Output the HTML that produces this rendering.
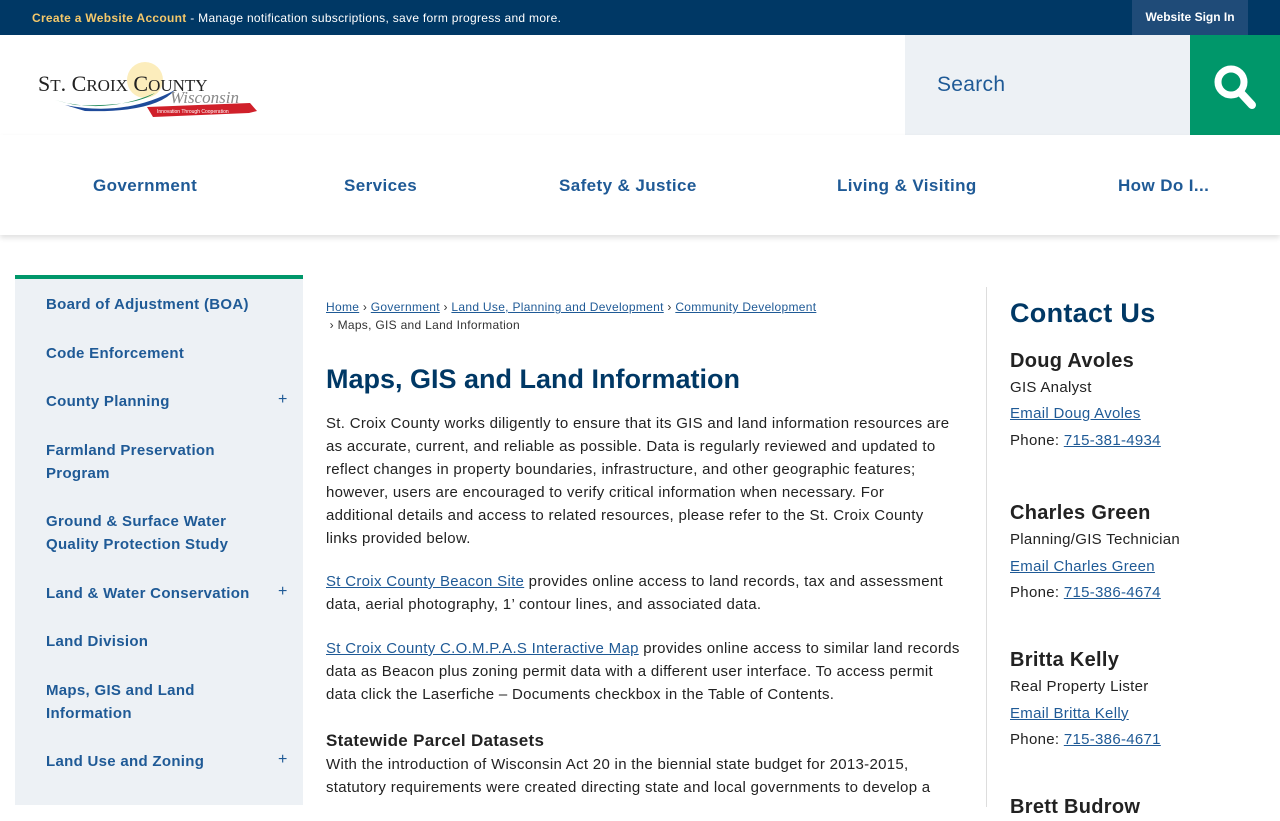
<!DOCTYPE html>
<html><head><meta charset="utf-8"><style>
*{box-sizing:border-box;margin:0;padding:0}
body{width:1280px;height:800px;overflow:hidden;background:#fff;font-family:"Liberation Sans",Arial,sans-serif;color:#222;position:relative}
a{color:#1f5a96}
.top{position:absolute;left:0;top:0;width:1280px;height:35px;background:#003865;color:#fff;font-size:12px;font-weight:bold}
.top .msg{position:absolute;left:32px;top:11px;letter-spacing:0.3px;white-space:nowrap}
.top .msg b{color:#f4c86a}
.top .msg span{font-weight:normal;color:#fff}
.top .sign{position:absolute;left:1132px;top:0;width:116px;height:35px;background:#1f4b78;text-align:center;line-height:35px;font-size:12px}
.search{position:absolute;left:905px;top:35px;width:285px;height:100px;background:#edf1f5;font-size:21px;color:#1f5a96;padding:38px 0 0 32px;letter-spacing:0.3px}
.sbtn{position:absolute;left:1190px;top:35px;width:90px;height:100px;background:#00976a}
.nav{position:absolute;left:0;top:135px;width:1280px;height:100px;background:#fff;box-shadow:0 3px 5px rgba(0,0,0,.12)}
.nav div{position:absolute;top:41px;font-size:17px;font-weight:bold;color:#1f5a96;letter-spacing:0.4px}
.side{position:absolute;left:15px;top:275px;width:288px;height:530px;background:#edf1f5;border-top:4px solid #00976a}
.side div{position:absolute;left:31px;font-size:15px;font-weight:bold;color:#1f5a96;line-height:23px;letter-spacing:0.3px;margin-top:-2px}
.side .p{position:absolute;left:263px;font-size:16px;color:#1f5a96;margin-top:-1px}
.bc{position:absolute;left:326px;top:298px;font-size:12px;line-height:18px;color:#333;letter-spacing:0.3px}
.bc a{color:#1f5a96}
h1{position:absolute;left:326px;top:364px;font-size:27px;color:#003865;font-weight:bold}
.txt{position:absolute;left:326px;width:660px;font-size:15px;line-height:23px;color:#222;letter-spacing:0.3px;white-space:nowrap}
.vline{position:absolute;left:986px;top:287px;width:1px;height:520px;background:#ddd}
.ct{position:absolute;left:1010px;font-size:15px;line-height:26.5px;letter-spacing:0.3px}
.ct h2{font-size:27px;color:#003865;margin-bottom:20px}
.ct h3{font-size:20px;color:#222;line-height:28px;margin-top:4px}
</style></head><body>
<div class="top"><div class="msg"><b>Create a Website Account</b><span> - Manage notification subscriptions, save form progress and more.</span></div><div class="sign">Website Sign In</div></div>

<svg style="position:absolute;left:35px;top:55px" width="225" height="65" viewBox="0 0 225 65">
<circle cx="110" cy="25" r="18" fill="#fbe6a0" opacity=".7"/>
<path d="M20 45 Q70 60 120 38 Q100 52 40 50Z" fill="#1f8a5a"/>
<path d="M30 50 Q90 62 140 35 Q120 58 50 56Z" fill="#1f4b9a"/>
<text x="3" y="36" font-family="Liberation Serif,serif" font-size="22" fill="#222">S<tspan font-size="17">T</tspan>. C<tspan font-size="17">ROIX</tspan> C<tspan font-size="17">OUNTY</tspan></text>
<text x="135" y="48" font-family="Liberation Serif,serif" font-style="italic" font-size="17" fill="#888">Wisconsin</text>
<path d="M112 52 L215 48 L222 56 L214 58 L118 62 Z" fill="#d0202a"/>
<text x="122" y="58" font-size="5" fill="#fff" font-family="Liberation Sans">Innovation Through Cooperation</text>
</svg>

<div class="search">Search</div>
<div class="sbtn"><svg width="90" height="100" viewBox="0 0 90 100"><circle cx="41" cy="47" r="13" fill="none" stroke="#fff" stroke-width="7"/><path d="M50 57 L62 70" stroke="#fff" stroke-width="8" stroke-linecap="round"/></svg></div>

<div class="nav">
<div style="left:93px">Government</div><div style="left:344px">Services</div><div style="left:559px">Safety &amp; Justice</div><div style="left:837px">Living &amp; Visiting</div><div style="left:1118px">How Do I...</div>
</div>

<div class="side">
<div style="top:16px">Board of Adjustment (BOA)</div>
<div style="top:65px">Code Enforcement</div>
<div style="top:113px">County Planning</div><span class="p" style="top:113px">+</span>
<div style="top:162px">Farmland Preservation<br>Program</div>
<div style="top:233px">Ground &amp; Surface Water<br>Quality Protection Study</div>
<div style="top:305px">Land &amp; Water Conservation</div><span class="p" style="top:305px">+</span>
<div style="top:353px">Land Division</div>
<div style="top:402px">Maps, GIS and Land<br>Information</div>
<div style="top:473px">Land Use and Zoning</div><span class="p" style="top:473px">+</span>
</div>

<div class="bc"><a href="#">Home</a> › <a href="#">Government</a> › <a href="#">Land Use, Planning and Development</a> › <a href="#">Community Development</a><br>&nbsp;› Maps, GIS and Land Information</div>
<h1>Maps, GIS and Land Information</h1>
<div class="txt" style="top:412px">St. Croix County works diligently to ensure that its GIS and land information resources are<br>as accurate, current, and reliable as possible. Data is regularly reviewed and updated to<br>reflect changes in property boundaries, infrastructure, and other geographic features;<br>however, users are encouraged to verify critical information when necessary. For<br>additional details and access to related resources, please refer to the St. Croix County<br>links provided below.</div>
<div class="txt" style="top:570px"><a href="#">St Croix County Beacon Site</a> provides online access to land records, tax and assessment<br>data, aerial photography, 1’ contour lines, and associated data.</div>
<div class="txt" style="top:637px"><a href="#">St Croix County C.O.M.P.A.S Interactive Map</a> provides online access to similar land records<br>data as Beacon plus zoning permit data with a different user interface. To access permit<br>data click the Laserfiche – Documents checkbox in the Table of Contents.</div>
<div class="txt" style="top:729px"><b style="font-size:17px">Statewide Parcel Datasets</b><br>With the introduction of Wisconsin Act 20 in the biennial state budget for 2013-2015,<br>statutory requirements were created directing state and local governments to develop a</div>

<div class="vline"></div>
<div class="ct" style="top:300px"><h2>Contact Us</h2>
<h3>Doug Avoles</h3>GIS Analyst<br><a href="#">Email Doug Avoles</a><br>Phone: <a href="#">715-381-4934</a></div>
<div class="ct" style="top:495px"><h3>Charles Green</h3>Planning/GIS Technician<br><a href="#">Email Charles Green</a><br>Phone: <a href="#">715-386-4674</a></div>
<div class="ct" style="top:642px"><h3>Britta Kelly</h3>Real Property Lister<br><a href="#">Email Britta Kelly</a><br>Phone: <a href="#">715-386-4671</a></div>
<div class="ct" style="top:789px"><h3>Brett Budrow</h3></div>
</body></html>
